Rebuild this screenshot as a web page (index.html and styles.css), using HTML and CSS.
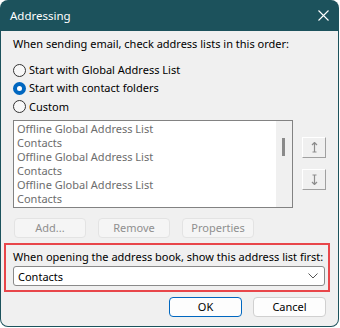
FILE: index.html
```html
<!DOCTYPE html>
<html>
<head>
  <title>Addressing</title>
  <link rel="stylesheet" href="styles.css">
</head>
<body>
  <div class="window">
    <div class="titlebar">
      <span class="title">Addressing</span>
      <svg class="close" width="11" height="11" viewBox="0 0 11 11">
        <path d="M0.5 0.5 L10.5 10.5 M10.5 0.5 L0.5 10.5" stroke="#fff" stroke-width="1.1" fill="none"/>
      </svg>
    </div>
    <div class="content">
      <div class="heading">When sending email, check address lists in this order:</div>

      <div class="radios">
        <label class="radio"><span class="dot"></span>Start with Global Address List</label>
        <label class="radio checked"><span class="dot"></span>Start with contact folders</label>
        <label class="radio"><span class="dot"></span>Custom</label>
      </div>

      <div class="list-row">
        <div class="listbox">
          <ul class="items">
            <li>Offline Global Address List</li>
            <li>Contacts</li>
            <li>Offline Global Address List</li>
            <li>Contacts</li>
            <li>Offline Global Address List</li>
            <li>Contacts</li>
          </ul>
          <div class="scrollbar"><span class="thumb"></span></div>
        </div>
        <div class="movers">
          <div class="mover">
            <svg width="7" height="11" viewBox="0 0 7 11">
              <path d="M1 3 L3.5 0.5 L6 3 M3.5 1 V9.5 M1.5 10 H5.5" stroke="#8c8c8c" stroke-width="1.2" fill="none"/>
            </svg>
          </div>
          <div class="mover">
            <svg width="7" height="11" viewBox="0 0 7 11">
              <path d="M1 8 L3.5 10.5 L6 8 M3.5 10 V1.5 M1.5 1 H5.5" stroke="#8c8c8c" stroke-width="1.2" fill="none"/>
            </svg>
          </div>
        </div>
      </div>

      <div class="actions">
        <button class="btn disabled">Add...</button>
        <button class="btn disabled">Remove</button>
        <button class="btn disabled">Properties</button>
      </div>

      <div class="highlight">
        <div class="label">When opening the address book, show this address list first:</div>
        <div class="select">
          <span>Contacts</span>
          <svg width="10" height="6" viewBox="0 0 10 6">
            <path d="M0.5 0.5 L5 5 L9.5 0.5" stroke="#555" stroke-width="1" fill="none"/>
          </svg>
        </div>
      </div>

      <div class="footer">
        <button class="btn default">OK</button>
        <button class="btn">Cancel</button>
      </div>
    </div>
  </div>
</body>
</html>
```

FILE: styles.css
```css
html, body {
  margin: 0;
  padding: 0;
  background: #fff;
}

body {
  font-family: "Noto Sans", "Open Sans", sans-serif;
  font-size: 11px;
  color: #000;
  white-space: nowrap;
}

.window {
  width: 339px;
  height: 327px;
  box-sizing: border-box;
  border-radius: 8px;
  overflow: hidden;
  background: #1c525c;
  padding: 0 1px 1px 1px;
  display: flex;
  flex-direction: column;
}

.titlebar {
  height: 31px;
  flex: none;
  display: flex;
  align-items: center;
  justify-content: space-between;
  padding: 0 9px 0 9px;
  color: #fff;
}

.title {
  font-size: 11.5px;
  margin-top: -1px;
}

.close {
  margin-top: -1px;
}

.content {
  flex: 1;
  background: #f0f0f0;
  border-radius: 0 0 7px 7px;
  padding: 0 12px;
}

.heading {
  line-height: 16px;
  margin-top: 5px;
}

.radios {
  margin-top: 9px;
}

.radio {
  display: flex;
  align-items: center;
  height: 18px;
  line-height: 16px;
}

.radio:nth-child(3) {
  height: 19px;
}

.dot {
  width: 11px;
  height: 11px;
  border: 1px solid #333;
  border-radius: 50%;
  background: #f8f8f8;
  margin-right: 3px;
  flex: none;
}

.radio.checked .dot {
  width: 5px;
  height: 5px;
  border: 4px solid #0067c0;
  background: #fff;
}

.list-row {
  display: flex;
  margin-top: 4px;
}

.listbox {
  width: 281px;
  height: 88px;
  box-sizing: border-box;
  border: 1px solid #828282;
  background: #fff;
  display: flex;
}

.items {
  list-style: none;
  margin: 0;
  padding: 1px 0 0 3px;
  flex: 1;
  color: #6d6d6d;
}

.items li {
  line-height: 14px;
}

.scrollbar {
  width: 16px;
  background: #f0f0f0;
  position: relative;
}

.thumb {
  position: absolute;
  left: 6px;
  top: 17px;
  width: 3px;
  height: 18px;
  background: #8a8a8a;
}

.movers {
  margin-left: 9px;
  padding-top: 17px;
}

.mover {
  width: 24px;
  height: 21px;
  box-sizing: border-box;
  border-top: 1px solid #fff;
  border-left: 1px solid #fff;
  border-right: 1px solid #a0a0a0;
  border-bottom: 1px solid #a0a0a0;
  background: #f0f0f0;
  display: flex;
  align-items: center;
  justify-content: center;
  margin-bottom: 11px;
}

.actions {
  display: flex;
  gap: 12px;
  margin-top: 10px;
  padding-left: 1px;
}

.btn {
  font-family: inherit;
  font-size: 11px;
  width: 72px;
  height: 20px;
  padding: 0;
  box-sizing: border-box;
  border: 1px solid #d0d0d0;
  border-radius: 4px;
  background: #fdfdfd;
  color: #000;
  line-height: 16px;
}

.btn.disabled {
  background: #f5f5f5;
  border-color: #e3e3e3;
  color: #8f8f8f;
}

.highlight {
  margin: 5px 0 0 -9px;
  width: 326px;
  box-sizing: border-box;
  border: 2px solid #e8464a;
  padding: 4px 3px 4px 7px;
}

.label {
  line-height: 16px;
}

.select {
  margin-top: 1px;
  height: 20px;
  box-sizing: border-box;
  border: 1px solid #8a8a8a;
  border-radius: 3px;
  background: #fff;
  display: flex;
  align-items: center;
  justify-content: space-between;
  padding: 0 6px 0 4px;
}

.footer {
  display: flex;
  justify-content: flex-end;
  gap: 11px;
  margin-top: 5px;
}

.footer .btn {
  width: 73px;
}

.btn.default {
  border: 1px solid #0067c0;
}
```
